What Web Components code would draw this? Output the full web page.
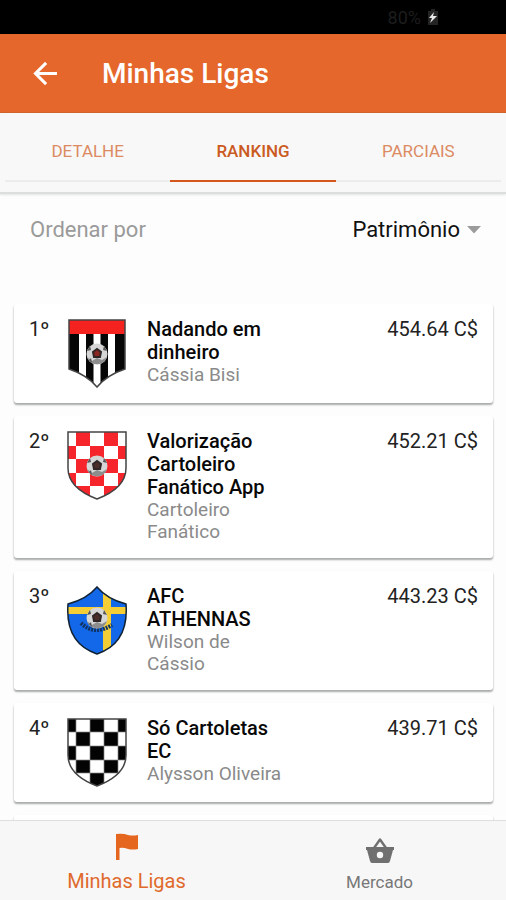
<!DOCTYPE html>
<html lang="pt-BR">
<head>
<meta charset="utf-8">
<meta name="viewport" content="width=device-width, initial-scale=1">
<title>Minhas Ligas</title>
<style>
  html, body { margin: 0; height: 100%; }
  body { font-family: Roboto, "Liberation Sans", sans-serif; background: #fdfdfd; color: #222; }
</style>
</head>
<body>
<league-app></league-app>

<script>
const define = (name, html, setup) => {
  const template = document.createElement('template');
  template.innerHTML = html;
  customElements.define(name, class extends HTMLElement {
    constructor() {
      super();
      this.attachShadow({ mode: 'open' }).append(template.content.cloneNode(true));
    }
    connectedCallback() { if (setup) setup(this, this.shadowRoot); }
  });
};

define('status-bar', `
<style>
  :host { display: flex; align-items: center; justify-content: flex-end; gap: 6px; height: 34px; padding-right: 67px; background: #000; color: #1d1d1d; font-size: 18px; box-sizing: border-box; }
  svg { display: block; }
</style>
<span>80%</span>
<svg width="12" height="18" viewBox="0 0 12 18" aria-hidden="true">
  <path d="M4 1h4v2h3v14H1V3h3z" fill="#242424"/>
  <path d="M7 4 2 10h3l-2 5 7-7H6z" fill="#e8e8e8"/>
</svg>`);

define('app-bar', `
<style>
  :host { display: flex; align-items: center; gap: 42px; height: 79px; padding: 1px 31px 0; background: #e5672b; border-bottom: 1px solid #cf5b20; color: #fff; box-sizing: border-box; }
  button { width: 29px; height: 40px; padding: 0; border: 0; background: none; color: inherit; }
  svg { display: block; }
  h1 { margin: 0; font-size: 28px; line-height: 32px; font-weight: 500; }
</style>
<button type="button" aria-label="Voltar">
  <svg width="29" height="29" viewBox="0 0 24 24" fill="none" stroke="currentColor" stroke-width="2.500"><path d="M21.500 12H4.500M12.500 3.200 3.700 12l8.800 8.800"/></svg>
</button>
<h1><slot></slot></h1>`);

define('tab-strip', `
<style>
  :host { display: block; padding: 0 5px 10px; background: #f8f8f8; border-bottom: 2px solid #dcdede; box-shadow: 0 1px 2px #e4e4e4; }
  nav { display: grid; grid-template-columns: repeat(3, 1fr); }
</style>
<nav><slot></slot></nav>`);

define('tab-item', `
<style>
  :host { display: block; }
  a { display: flex; align-items: center; justify-content: center; height: 69px; padding-top: 8px; box-sizing: border-box; border-bottom: 2px solid #ececec; font-size: 17px; font-weight: 400; color: #dc8a62; text-decoration: none; }
  :host([active]) a { color: #cb5a22; border-bottom-color: #d4581c; font-weight: 500; }
</style>
<a href="#"><slot></slot></a>`);

define('sort-row', `
<style>
  :host { display: flex; align-items: center; justify-content: space-between; padding: 22px 25px 0 30px; font-size: 22px; line-height: 28px; }
  label { color: #9a9a9a; }
  .pick { display: flex; align-items: center; }
  select { appearance: none; border: 0; background: none; padding: 0 21px 0 0; margin: 0; font: inherit; color: #111; text-align: right; }
  svg { display: block; margin-left: -14px; pointer-events: none; }
</style>
<label for="order">Ordenar por</label>
<span class="pick">
  <select id="order"><option>Patrimônio</option></select>
  <svg width="14" height="8" viewBox="0 0 14 8" aria-hidden="true"><path d="M0 0h14L7 7.500z" fill="#9b9b9b"/></svg>
</span>`);

const ball = (x, y, c) => `
  <circle cx="${x}" cy="${y}" r="10.500" fill="#d6d6d6"/>
  <path d="M${x - 10} ${y + 3}a10.500 10.500 0 0 0 20 0l-5 3-5-2-5 3z" fill="#8d8d8d"/>
  <path d="M${x - 4} ${y - 2}l4-3 4 3-1 5h-6z" fill="${c}" stroke="#302626" stroke-width="2"/>
  <path d="M${x - 10} ${y - 3}l3-5 1 4zM${x + 10} ${y - 3}l-3-5-1 4zM${x - 8} ${y + 6}l2-2 1 5z" fill="#555"/>`;
const checks = (xs, ys, fill, first) => {
  let out = '';
  for (let r = 0; r < ys.length - 1; r++)
    for (let c = 0; c < xs.length - 1; c++)
      if ((r + c) % 2 === first)
        out += `<rect x="${xs[c]}" y="${ys[r]}" width="${xs[c + 1] - xs[c]}" height="${ys[r + 1] - ys[r]}" fill="${fill}"/>`;
  return out;
};
const round = 'M2 2H60V38C60 54 47 63 31 69C15 63 2 54 2 38Z';
const pointed = 'M3 2H59V51Q41 57 31 69Q21 57 3 51Z';
const winged = 'M31 2Q41 14 60 19C62 45 52 62 31 69C10 62 0 45 2 19Q21 14 31 2Z';
const crests = {
  stripes: `
    <clipPath id="s"><path d="${pointed}"/></clipPath>
    <g clip-path="url(#s)">
      <path d="M0 0h64v72H0z" fill="#060606"/>
      <path d="M13 16h7v54h-7zM27.500 16h7v54h-7zM42 16h7v54h-7z" fill="#fff"/>
      <path d="M0 0h64v16H0z" fill="#f5231f"/>
    </g>
    <path d="${pointed}" fill="none" stroke="#444" stroke-width="1.500"/>
    ${ball(31, 36, '#8c2620')}`,
  red: `
    <clipPath id="s"><path d="${round}"/></clipPath>
    <g clip-path="url(#s)"><path d="M0 0h64v72H0z" fill="#fff"/>${checks([0, 10, 24, 38, 52, 64], [0, 16, 29, 43, 56, 72], '#f5252b', 1)}</g>
    <path d="${round}" fill="none" stroke="#444" stroke-width="1.500"/>
    ${ball(31, 36, '#4a2c2b')}`,
  cross: `
    <clipPath id="s"><path d="${winged}"/></clipPath>
    <g clip-path="url(#s)">
      <path d="M0 0h64v72H0z" fill="#1268e8"/>
      <path d="M0 22h64v7H0zM37 0h8v72h-8z" fill="#f5ce35"/>
    </g>
    <path d="${winged}" fill="none" stroke="#123" stroke-width="1.500"/>
    <path d="M15 38Q28 51 46 40" fill="none" stroke="#123463" stroke-width="4" stroke-dasharray="2 1"/>
    ${ball(31, 33, '#4a2c2b')}`,
  black: `
    <clipPath id="s"><path d="${round}"/></clipPath>
    <g clip-path="url(#s)"><path d="M0 0h64v72H0z" fill="#fff"/>${checks([0, 10, 24, 38, 52, 64], [0, 15, 29, 43, 56, 72], '#030303', 0)}
    <path d="M10 0v72M24 0v72M38 0v72M52 0v72M0 15h64M0 29h64M0 43h64M0 56h64" stroke="#888" stroke-width=".7"/></g>
    <path d="${round}" fill="none" stroke="#444" stroke-width="1.500"/>`
};

define('team-crest', `
<style>:host { display: block; width: 64px; height: 70px; } svg { display: block; }</style>
<div></div>`, (el, root) => {
  root.querySelector('div').innerHTML = `<svg width="64" height="70" viewBox="0 0 64 70" aria-hidden="true">${crests[el.getAttribute('kind')]}</svg>`;
});

define('rank-card', `
<style>
  :host { display: block; min-height: 99px; padding: 14px 15px 15px; box-sizing: border-box; border-radius: 3px; background: #fff; box-shadow: 0 2px 2px #a9acab, 0 1px 2px #e4e4e4; }
  article { display: grid; grid-template-columns: 37px 81px minmax(0, 5fr) minmax(0, 7fr); align-items: start; }
  .rank, .score { font-size: 20px; line-height: 23px; }
  .score { text-align: right; white-space: nowrap; }
  h2 { margin: 0; font-size: 20px; line-height: 23px; font-weight: 500; color: #080808; }
  p { margin: 0; font-size: 19px; line-height: 22px; color: #8a8a8a; }
</style>
<article>
  <span class="rank"><slot name="rank"></slot></span>
  <div><slot name="crest"></slot></div>
  <div><h2><slot name="team"></slot></h2><p><slot name="owner"></slot></p></div>
  <span class="score"><slot name="score"></slot></span>
</article>`);

define('nav-item', `
<style>
  :host { display: block; }
  a { display: flex; flex-direction: column; align-items: center; justify-content: flex-end; height: 79px; padding-bottom: 7px; box-sizing: border-box; color: #777; font-size: 17px; line-height: 22px; gap: 5px; text-decoration: none; }
  :host([active]) a { color: #e06a2c; font-size: 20px; line-height: 24px; }
</style>
<a href="#"><slot name="icon"></slot><slot></slot></a>`);

define('bottom-nav', `
<style>
  :host { display: block; background: #f7f7f7; border-top: 1px solid #dedede; }
  nav { display: grid; grid-template-columns: 1fr 1fr; }
</style>
<nav><slot></slot></nav>`);

define('league-app', `
<style>
  :host { display: flex; flex-direction: column; height: 100vh; }
  main { flex: 1; min-height: 0; overflow-y: auto; scrollbar-width: none; }
  .cards { display: flex; flex-direction: column; gap: 13px; padding: 60px 13px 13px 14px; }
  svg { display: block; }
</style>
<status-bar></status-bar>
<app-bar>Minhas Ligas</app-bar>
<tab-strip><tab-item>DETALHE</tab-item><tab-item active>RANKING</tab-item><tab-item>PARCIAIS</tab-item></tab-strip>
<main>
  <sort-row></sort-row>
  <div class="cards">
    <rank-card>
      <span slot="rank">1º</span><team-crest slot="crest" kind="stripes"></team-crest>
      <span slot="team">Nadando em dinheiro</span><span slot="owner">Cássia Bisi</span><span slot="score">454.64 C$</span>
    </rank-card>
    <rank-card>
      <span slot="rank">2º</span><team-crest slot="crest" kind="red"></team-crest>
      <span slot="team">Valorização Cartoleiro Fanático App</span><span slot="owner">Cartoleiro Fanático</span><span slot="score">452.21 C$</span>
    </rank-card>
    <rank-card>
      <span slot="rank">3º</span><team-crest slot="crest" kind="cross"></team-crest>
      <span slot="team">AFC ATHENNAS</span><span slot="owner">Wilson de Cássio</span><span slot="score">443.23 C$</span>
    </rank-card>
    <rank-card>
      <span slot="rank">4º</span><team-crest slot="crest" kind="black"></team-crest>
      <span slot="team">Só Cartoletas EC</span><span slot="owner">Alysson Oliveira</span><span slot="score">439.71 C$</span>
    </rank-card>
    <rank-card></rank-card>
  </div>
</main>
<bottom-nav>
  <nav-item active>
    <svg slot="icon" width="32" height="32" viewBox="0 0 32 32" aria-hidden="true"><path d="M5 2Q12 1 17 3Q22 4 27 3V17Q22 18 17 17Q12 15 8.500 16V28H5z" fill="#e5671f"/></svg>Minhas Ligas
  </nav-item>
  <nav-item>
    <svg slot="icon" width="32" height="32" viewBox="0 0 32 32" aria-hidden="true">
      <path d="M10 14 16 5.500l6 8.500" fill="none" stroke="#707070" stroke-width="2.400" stroke-linejoin="round"/>
      <path fill-rule="evenodd" d="M2 13H30V16H29L26 27Q25.500 29 24 29H8Q6.500 29 6 27L3 16H2zM16 17.800a3.200 3.200 0 1 0 0 6.400a3.200 3.200 0 1 0 0-6.400z" fill="#707070"/>
    </svg>Mercado
  </nav-item>
</bottom-nav>`);
</script>
</body>
</html>
